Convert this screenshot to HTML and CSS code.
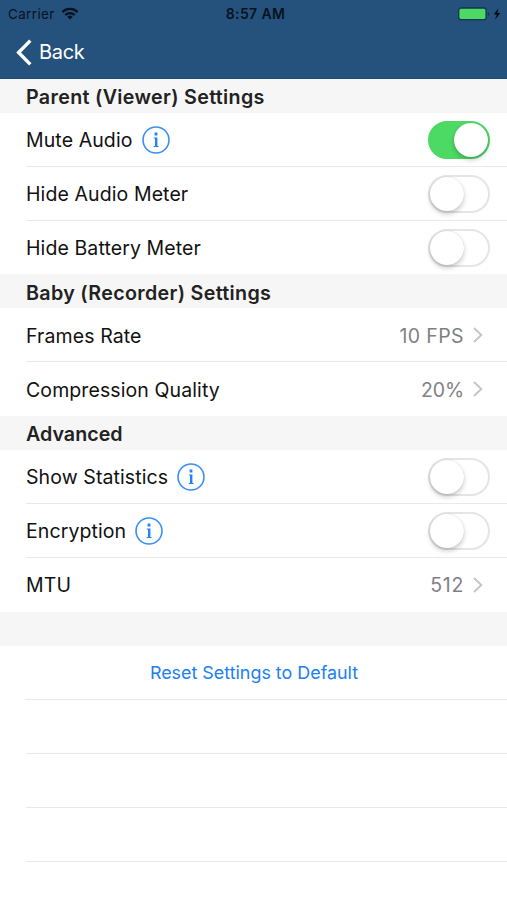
FILE: index.html
```html
<!DOCTYPE html>
<html lang="en">
<head>
<meta charset="utf-8">
<title>Settings</title>
<link rel="stylesheet" href="styles.css">
</head>
<body>
<header class="top">
  <div class="status">
    <div class="carrier"><span>Carrier</span>
      <svg width="18" height="13" viewBox="0 0 18 13"><g fill="none" stroke="#07121d" stroke-width="2.2"><path d="M1.4 5.1a10.8 10.8 0 0 1 15.2 0"/><path d="M4.3 8a6.7 6.7 0 0 1 9.4 0"/></g><path fill="#07121d" d="M6.3 9.8a3.9 3.9 0 0 1 5.4 0L9 12.5z"/></svg>
    </div>
    <div class="clock">8:57 AM</div>
    <div class="power">
      <svg width="45" height="14" viewBox="0 0 45 14"><rect x=".7" y="1" width="27.4" height="11.6" rx="2.2" fill="#4cd964" stroke="#123554" stroke-width="1.3"/><path d="M29.8 5v4q1.4-.6 1.4-2t-1.4-2z" fill="#123554"/><path d="M40.4 1.2 35.8 7.4h3L36.9 12.8 42.3 6h-3z" fill="#050a10"/></svg>
    </div>
  </div>
  <a class="back"><svg width="17" height="27" viewBox="0 0 17 27"><path d="M14.3 1.6 2.6 13.5l11.7 11.9" fill="none" stroke="#fff" stroke-width="3.4"/></svg><span>Back</span></a>
</header>
<main>
  <h2>Parent (Viewer) Settings</h2>
  <section>
    <div class="row"><span class="label">Mute Audio</span><svg class="info" width="28" height="28" viewBox="0 0 28 28"><circle cx="14" cy="14" r="13"/><path d="M12.6 6.6h2.8v2.8h-2.8zM11.8 11.4h3.6v8.6h1.2V21h-4.8v-1h1.2v-7.6h-1.2z"/></svg><b class="switch on"></b></div>
    <div class="row"><span class="label">Hide Audio Meter</span><b class="switch"></b></div>
    <div class="row last short"><span class="label">Hide Battery Meter</span><b class="switch"></b></div>
  </section>
  <h2 class="low">Baby (Recorder) Settings</h2>
  <section>
    <div class="row low"><span class="label">Frames Rate</span><span class="value">10 FPS</span><svg class="chev" width="10" height="16" viewBox="0 0 10 16"><path d="m1 1 7.3 7L1 15"/></svg></div>
    <div class="row low last"><span class="label">Compression Quality</span><span class="value percent">20%</span><svg class="chev" width="10" height="16" viewBox="0 0 10 16"><path d="m1 1 7.3 7L1 15"/></svg></div>
  </section>
  <h2 class="single">Advanced</h2>
  <section>
    <div class="row"><span class="label">Show Statistics</span><svg class="info" width="28" height="28" viewBox="0 0 28 28"><circle cx="14" cy="14" r="13"/><path d="M12.6 6.6h2.8v2.8h-2.8zM11.8 11.4h3.6v8.6h1.2V21h-4.8v-1h1.2v-7.6h-1.2z"/></svg><b class="switch"></b></div>
    <div class="row"><span class="label">Encryption</span><svg class="info" width="28" height="28" viewBox="0 0 28 28"><circle cx="14" cy="14" r="13"/><path d="M12.6 6.6h2.8v2.8h-2.8zM11.8 11.4h3.6v8.6h1.2V21h-4.8v-1h1.2v-7.6h-1.2z"/></svg><b class="switch"></b></div>
    <div class="row last"><span class="label">MTU</span><span class="value digits">512</span><svg class="chev" width="10" height="16" viewBox="0 0 10 16"><path d="m1 1 7.3 7L1 15"/></svg></div>
  </section>
  <h2></h2>
  <section>
    <div class="row action"><a>Reset Settings to Default</a></div>
    <div class="row"></div>
    <div class="row"></div>
    <div class="row"></div>
  </section>
</main>
</body>
</html>
```

FILE: styles.css
```css
* { box-sizing: border-box; }
body {
  margin: 0;
  height: 900px;
  overflow: hidden;
  background: #fff;
  color: #111;
  font-family: Inter, "Liberation Sans", sans-serif;
}
svg { display: block; flex: none; }
.top {
  height: 79px;
  background: #25527d;
  border-bottom: 1px solid #1f4a73;
}
.status {
  display: grid;
  grid-template-columns: 1fr auto 1fr;
  align-items: center;
  height: 27px;
  padding: 0 4px 0 8px;
  color: #07121d;
  font-size: 13.4px;
}
.carrier { display: flex; align-items: center; gap: 6px; letter-spacing: .4px; }
.clock { font-size: 14px; font-weight: 600; letter-spacing: .35px; }
.power { justify-self: end; }
.back {
  display: flex;
  align-items: center;
  gap: 6px;
  height: 50px;
  padding-left: 16px;
  color: #fff;
  font-size: 20px;
  letter-spacing: -.3px;
}
h2 {
  display: flex;
  align-items: center;
  height: 34px;
  margin: 0;
  padding: 2px 0 0 26px;
  background: #f6f6f6;
  color: #222;
  font-size: 19.7px;
  font-weight: 600;
  letter-spacing: .32px;
}
h2.low { padding-top: 3px; }
.single { letter-spacing: 0; }
.row {
  display: flex;
  align-items: center;
  height: 54px;
  margin-left: 26px;
  padding: 1px 17px 0 0;
  border-bottom: 1px solid #e9e9ea;
  font-size: 19.5px;
}
.row.last { border-bottom-color: transparent; }
.row.short { height: 53px; padding-top: 2px; }
.row.low { padding-top: 2px; }
.label { letter-spacing: .1px; }
.info { margin-left: 9px; }
.info circle { fill: none; stroke: #3b8ff3; stroke-width: 1.6; }
.info path { fill: #2282f5; }
.switch {
  width: 62px;
  height: 38px;
  margin-left: auto;
  border: 2px solid #e5e5e6;
  border-radius: 19px;
}
.switch::before {
  content: "";
  display: block;
  width: 34px;
  height: 34px;
  border-radius: 50%;
  background: #fff;
  box-shadow: 0 3px 5px rgba(0, 0, 0, .2), 0 0 1px rgba(0, 0, 0, .2);
}
.switch.on { background: #4cd964; border-color: #4cd964; }
.switch.on::before { margin-left: 24px; }
.value { margin-left: auto; color: #808084; letter-spacing: .4px; }
.percent { letter-spacing: -.1px; }
.digits { letter-spacing: .7px; }
.chev { margin: 0 7px 0 9px; }
.row.low .chev { margin-top: -1px; }
.chev path { fill: none; stroke: #c3c3c7; stroke-width: 1.8; }
.action {
  justify-content: center;
  margin-left: 0;
  padding: 0 0 0 1px;
  color: #2080f2;
  font-size: 17.9px;
  border-image: linear-gradient(to right, transparent 26px, #e9e9ea 26px) 1;
}
```
